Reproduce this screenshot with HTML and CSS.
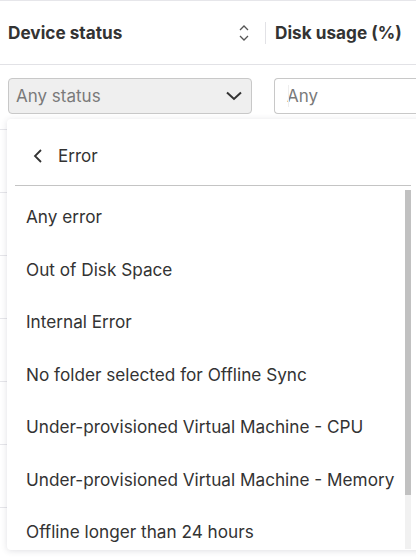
FILE: index.html
```html
<!DOCTYPE html>
<html>
<head>
<meta charset="utf-8">
<link rel="stylesheet" href="styles.css">
</head>
<body>
<div class="table">
  <div class="head-row">
    <div class="th th-status">
      <span class="th-label">Device status</span>
      <svg class="sort" width="12" height="18" viewBox="0 0 12 18"><path d="M2 6 L6 2 L10 6" fill="none" stroke="#555" stroke-width="1.3"/><path d="M2 12 L6 16 L10 12" fill="none" stroke="#555" stroke-width="1.3"/></svg>
      <span class="col-div"></span>
    </div>
    <div class="th th-disk"><span class="th-label">Disk usage (%)</span></div>
  </div>
  <div class="filter-row">
    <div class="select">
      <span class="select-text">Any status</span>
      <svg width="18" height="10" viewBox="0 0 18 10"><path d="M2 1.5 L9 8 L16 1.5" fill="none" stroke="#333" stroke-width="2"/></svg>
    </div>
    <div class="input"><span class="caret"></span><span class="input-text">Any</span></div>
  </div>
  <div class="row"></div>
  <div class="row"></div>
  <div class="row"></div>
  <div class="row"></div>
  <div class="row"></div>
  <div class="row"></div>
  <div class="row"></div>

  <div class="popup">
    <div class="popup-head">
      <svg class="back" width="10" height="16" viewBox="0 0 10 16"><path d="M8 2 L2 8 L8 14" fill="none" stroke="#333" stroke-width="1.8"/></svg>
      <span class="popup-title">Error</span>
    </div>
    <div class="popup-divider"></div>
    <div class="popup-body">
      <ul class="list">
        <li>Any error</li>
        <li>Out of Disk Space</li>
        <li>Internal Error</li>
        <li>No folder selected for Offline Sync</li>
        <li>Under-provisioned Virtual Machine - CPU</li>
        <li>Under-provisioned Virtual Machine - Memory</li>
        <li>Offline longer than 24 hours</li>
      </ul>
      <div class="scrollbar"><div class="thumb"></div></div>
    </div>
  </div>
</div>
</body>
</html>
```
FILE: styles.css
```css
html, body {
  margin: 0;
  padding: 0;
  background: #fff;
  font-family: Inter, "Liberation Sans", sans-serif;
  color: #333;
}
.table {
  position: relative;
  width: 416px;
  height: 558px;
  overflow: hidden;
  border-top: 1px solid #e6e6ea;
}
.head-row {
  display: flex;
  height: 63px;
  border-bottom: 1px solid #e2e2e6;
  align-items: center;
}
.th {
  display: flex;
  align-items: center;
}
.th-status {
  width: 266px;
  padding-left: 8px;
  box-sizing: border-box;
}
.th-label {
  font-weight: 700;
  font-size: 17.2px;
  color: #333;
}
.th-status .th-label { flex: 1; }
.sort { margin-right: 15px; }
.col-div {
  width: 1px;
  height: 22px;
  background: #e2e2e6;
}
.th-disk { padding-left: 9px; }
.filter-row {
  display: flex;
  gap: 22px;
  padding: 13px 0 0 8px;
  height: 65px;
  box-sizing: border-box;
  border-bottom: 1px solid #e6e6ea;
}
.select {
  width: 244px;
  height: 36px;
  box-sizing: border-box;
  border: 1px solid #c8c8c8;
  border-radius: 4px;
  background: #efefef;
  display: flex;
  align-items: center;
  justify-content: space-between;
  padding: 0 8px 0 7px;
}
.select-text, .input-text {
  font-size: 17px;
  color: #7a7a7a;
}
.input {
  flex: 1;
  height: 36px;
  box-sizing: border-box;
  border: 1px solid #c8c8c8;
  border-right: none;
  border-radius: 4px 0 0 4px;
  display: flex;
  align-items: center;
  padding-left: 12px;
  position: relative;
}
.caret {
  position: absolute;
  left: 13px;
  top: 6px;
  width: 1px;
  height: 22px;
  background: #eee;
}
.row {
  height: 62px;
  border-bottom: 1px solid #e6e6ea;
}
.popup {
  position: absolute;
  left: 7px;
  top: 118px;
  width: 420px;
  height: 431px;
  background: #fff;
  border-radius: 4px;
  box-shadow: 0 1px 6px rgba(60, 60, 90, 0.16);
  display: flex;
  flex-direction: column;
}
.popup-head {
  height: 66px;
  box-sizing: border-box;
  padding: 8px 0 0 26px;
  display: flex;
  align-items: center;
  gap: 15px;
}
.popup-title {
  font-size: 17px;
  color: #333;
}
.popup-divider {
  height: 1px;
  background: #c4c4c4;
  margin: 0 16px 0 8px;
}
.popup-body {
  flex: 1;
  display: flex;
  min-height: 0;
}
.list {
  list-style: none;
  margin: 0;
  padding: 5px 0 0 19px;
  flex: 1;
}
.list li {
  height: 52.5px;
  line-height: 52.5px;
  font-size: 17.2px;
  color: #333;
  white-space: nowrap;
}
.scrollbar {
  width: 6px;
  margin: 4px 16px 0 0;
  background: #f1f1f1;
  margin-bottom: 1px;
}
.thumb {
  height: 305px;
  background: #c1c1c1;
}
```
